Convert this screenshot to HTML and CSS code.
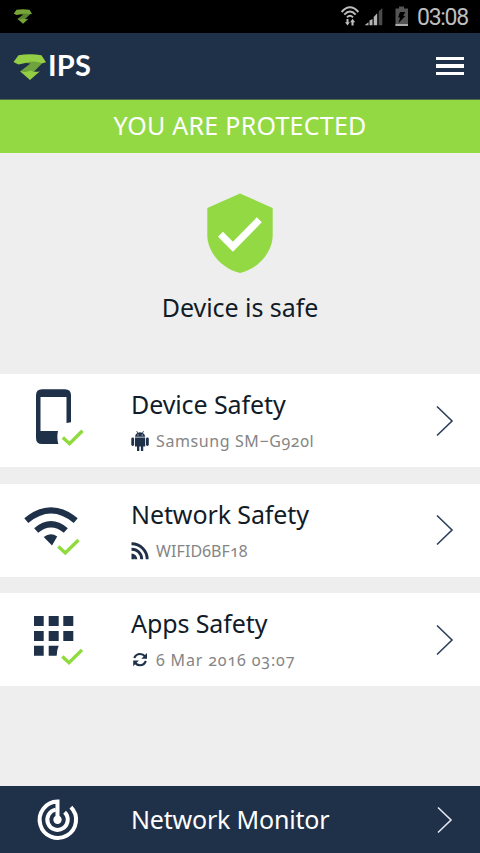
FILE: index.html
```html
<!DOCTYPE html>
<html lang="en">
<head>
<meta charset="utf-8">
<title>IPS</title>
<link rel="stylesheet" href="styles.css">
</head>
<body>
<div class="status">
  <svg class="status-logo" width="18" height="15" viewBox="0 0 32 26"><use href="#z-logo"/></svg>
  <svg class="status-icons" width="72" height="24" viewBox="338 5 72 24">
    <g fill="none" stroke="#bdbdbd" stroke-width="1.9">
      <path d="M341.6 12Q350 2.600 358.400 12"/>
      <path d="M344.300 14.700Q350 8.400 355.700 14.700"/>
      <path d="M347 17.300Q350 14.200 353 17.300"/>
    </g>
    <path fill="#bdbdbd" d="M346.500 19h2v3.300h1.300l-2.300 3.300-2.500-3.300h1.500zM351.500 25.500v-3.300h-1.400l2.500-3.500 2.500 3.500h-1.500v3.300z"/>
    <path fill="#b4b4b4" d="M364.500 25.200l4-3v3zM369.500 20.600l3-1.600v6.200h-3zM373.700 17l3.500-3.700v11.900h-3.500z"/>
    <path fill="#4b4b4b" d="M378.700 11.500l3.600-3.500v17.200h-3.600z"/>
    <path fill="#555" d="M399 6.500h5v2h4V26h-12.500V8.500h3.500z"/>
    <path fill="#000" d="M400 12h5.200l-2 4h2.200l-7 7.300 1.700-5.800h-2z"/>
    <path fill="#aaa" d="M395.500 24h12.500v2h-12.500z"/>
  </svg>
  <span class="clock">03:08</span>
</div>
<header class="header">
  <svg class="logo" width="32" height="26" viewBox="0 0 32 26">
    <g id="z-logo">
      <path fill="#6fa33d" d="M12 9L14 6.500H26L29 8.500 20 17.500Q12 20 6 17.500L16.500 9.500z"/>
      <path fill="#94ce45" d="M-.5 8L4.500 1.200Q16-.8 27.500 1.200L32 8.300 28.500 9.200Q19 6 12.500 8.800L4.500 10.500zM6 17.200Q12 19 16.500 16.500 21 18.500 26 17.200L16 26z"/>
    </g>
  </svg>
  <span class="brand">IPS</span>
  <span class="burger"><i></i><i></i><i></i></span>
</header>
<div class="banner"><span>YOU ARE PROTECTED</span></div>
<section class="hero">
  <svg width="66" height="80" viewBox="207 193 66 80">
    <path fill="#93d944" d="M240 193.500L272.700 208v27c0 17-14 33.500-32.700 38-18.700-4.500-32.700-21-32.700-38v-27z"/>
    <path fill="none" stroke="#fff" stroke-width="7" d="M220.500 234.200L232.900 246.800 259.300 219.800"/>
  </svg>
  <p>Device is safe</p>
</section>
<main class="cards">
  <article class="card">
    <svg class="lead" width="131" height="93" viewBox="0 374 131 93">
      <path fill="#1f3149" fill-rule="evenodd" d="M42 389.300h23q6 0 6 6v26.900l-4.500.7V397H40.500v34H58q-1.500 6 .3 13H42q-6 0-6-6v-42.700q0-6 6-6z"/>
      <path class="tick" d="M62.800 437.500L69.500 443.700 82.500 430.700"/>
    </svg>
    <div class="info">
      <h2 class="t-device">Device Safety</h2>
      <div class="sub">
        <svg width="18" height="20" viewBox="131.500 431 18 20"><g fill="#1f3149"><path d="M135.500 436.800q.3-2.600 2.300-3.700l-1-1.800.7-.2 1 1.600q2-.7 4.200 0l1-1.600.7.200-1 1.800q2 1.100 2.300 3.700zM135.500 437.500h10.200v9h-2v4.500h-2.300v-4.500h-1.600v4.500h-2.300v-4.500h-2z"/><rect x="131.800" y="437.600" width="2.800" height="8.300" rx="1.300"/><rect x="146.500" y="437.600" width="2.800" height="8.300" rx="1.300"/></g><path fill="#fff" d="M138 434.400h1v1h-1zM142.200 434.400h1v1h-1z"/></svg>
        <span class="s-device">Samsung SM−G920l</span>
      </div>
    </div>
    <svg class="arrow" width="18" height="32" viewBox="0 0 18 32"><path d="M1 1.500L16 16 1 30.500"/></svg>
  </article>
  <article class="card">
    <svg class="lead" width="131" height="93" viewBox="0 483.500 131 93">
      <path fill="none" stroke="#1f3149" stroke-width="6.200" d="M26.300 520.200Q51 499.500 75.700 520.200M36.200 530Q51 517.500 65.800 530"/>
      <path fill="#1f3149" d="M43.700 536.500Q50.500 531.500 57.200 536L52 545z"/>
      <path class="tick" d="M58.300 546L65.300 552.500 78.500 539.500"/>
    </svg>
    <div class="info">
      <h2 class="t-network">Network Safety</h2>
      <div class="sub">
        <svg width="18" height="20" viewBox="131.500 541 18 20"><g fill="none" stroke="#1f3149" stroke-width="2.900"><path d="M132 543.800A15.500 15.500 0 0 1 147.700 559.300M132 549.200A10 10 0 0 1 142.200 559.300"/></g><path fill="#1f3149" d="M132 553.500a5.800 5.800 0 0 1 5.800 5.800h-3q0-2.800-2.800-2.800zM132 556.500h2.500v2.800h-2.500z"/></svg>
        <span class="s-network">WIFID6BF18</span>
      </div>
    </div>
    <svg class="arrow" width="18" height="32" viewBox="0 0 18 32"><path d="M1 1.500L16 16 1 30.500"/></svg>
  </article>
  <article class="card">
    <svg class="lead" width="131" height="93" viewBox="0 593 131 93">
      <path fill="#1f3149" d="M34 616h9.700v10H34zM48.700 616h10v10h-10zM63.300 616h10v10h-10zM34 631h9.700v10H34zM48.700 631h10v10h-10zM63.300 631h10v10h-10zM34 645.700h9.700v10H34zM48.700 645.700h10q-2 4-2 10h-8z"/>
      <path class="tick" d="M62.300 656.500L69 662.700 82 649.900"/>
    </svg>
    <div class="info">
      <h2 class="t-apps">Apps Safety</h2>
      <div class="sub">
        <svg width="18" height="20" viewBox="131.500 651 18 20"><g fill="none" stroke="#1f3149" stroke-width="2.100"><path d="M134.700 659Q136.500 655 140.500 655 143.700 655 145.700 657.500M146.400 662Q144.500 666.300 140.500 666.300 137.500 666.300 135.300 663.800"/></g><path fill="#1f3149" d="M147.500 654v5.700h-5.700zM133.700 667.200v-5.700h5.700z"/></svg>
        <span class="s-apps">6 Mar 2016 03:07</span>
      </div>
    </div>
    <svg class="arrow" width="18" height="32" viewBox="0 0 18 32"><path d="M1 1.500L16 16 1 30.500"/></svg>
  </article>
</main>
<footer class="footer">
  <svg class="lead" width="131" height="67" viewBox="0 786 131 67">
    <g fill="none" stroke="#fff" stroke-width="4"><path d="M57.500 819.800V801.600A18.200 18.200 0 1 0 70.900 807.100"/><path d="M55.800 809.600A10.200 10.200 0 1 0 64.600 812.300"/></g><circle cx="57.500" cy="819.800" r="4.200" fill="#fff"/>
  </svg>
  <span class="t-monitor">Network Monitor</span>
  <svg class="arrow" width="18" height="28" viewBox="0 0 18 28"><path d="M2 1.500L15 14 2 26.500"/></svg>
</footer>
</body>
</html>
```
FILE: styles.css
```css
* { box-sizing: border-box; margin: 0; padding: 0; }
body {
  width: 480px; height: 853px; overflow: hidden;
  display: flex; flex-direction: column;
  background: #eee; color: #121b28;
  font-family: "Noto Sans", sans-serif;
  white-space: nowrap;
}
svg { display: block; flex: none; }
.status { height: 33px; flex: none; background: #000; display: flex; align-items: center; }
.status-logo { margin-left: 14px; opacity: .8; }
.status-icons { margin-left: 306px; }
.clock { margin: 2px 0 0 7px; font: 23px/30px Roboto, sans-serif; color: #bebebe; letter-spacing: -1.3px; }
.header { height: 67px; flex: none; background: #1f3149; border-bottom: 1px solid #4b6d48; display: flex; align-items: center; padding: 0 16px 0 14px; }
.logo { margin-top: 1px; overflow: visible; }
.brand { margin: -2px 0 0 2px; font: 700 29px/34px Lato, sans-serif; color: #fff; letter-spacing: .2px; }
.burger { margin-left: auto; width: 28px; display: grid; gap: 4px; }
.burger i { height: 3.500px; background: #fff; }
.banner { height: 53px; flex: none; background: #93d944; color: #fff; font-size: 25px; line-height: 51px; text-align: center; letter-spacing: .25px; }
.hero { height: 221px; flex: none; padding-top: 40px; display: flex; flex-direction: column; align-items: center; }
.hero p { margin-top: 16px; font-size: 25px; line-height: 36px; letter-spacing: -.05px; }
.cards { display: grid; gap: 16.500px; }
.card { height: 93px; background: #fff; display: flex; align-items: center; padding-right: 26px; }
.info { align-self: flex-start; padding-top: 13px; }
h2 { font-size: 25px; line-height: 34px; font-weight: 400; letter-spacing: -.1px; }
.sub { display: flex; align-items: center; gap: 7px; height: 20px; margin-top: 10px; font-size: 16px; color: #858585; font-variant-numeric: oldstyle-nums; }
.s-device { letter-spacing: .6px; }
.s-network { letter-spacing: .1px; }
.s-apps { letter-spacing: .85px; }
.arrow { margin-left: auto; fill: none; stroke: #2c405c; stroke-width: 1.600; }
.tick { fill: none; stroke: #8edb3b; stroke-width: 3.400; }
.footer { margin-top: auto; height: 67px; flex: none; background: #1f3149; color: #fff; display: flex; align-items: center; padding-right: 26px; font-size: 25px; }
.t-monitor { margin-top: -2px; letter-spacing: -.2px; }
.footer .arrow { stroke: #e4e8ee; }
```
